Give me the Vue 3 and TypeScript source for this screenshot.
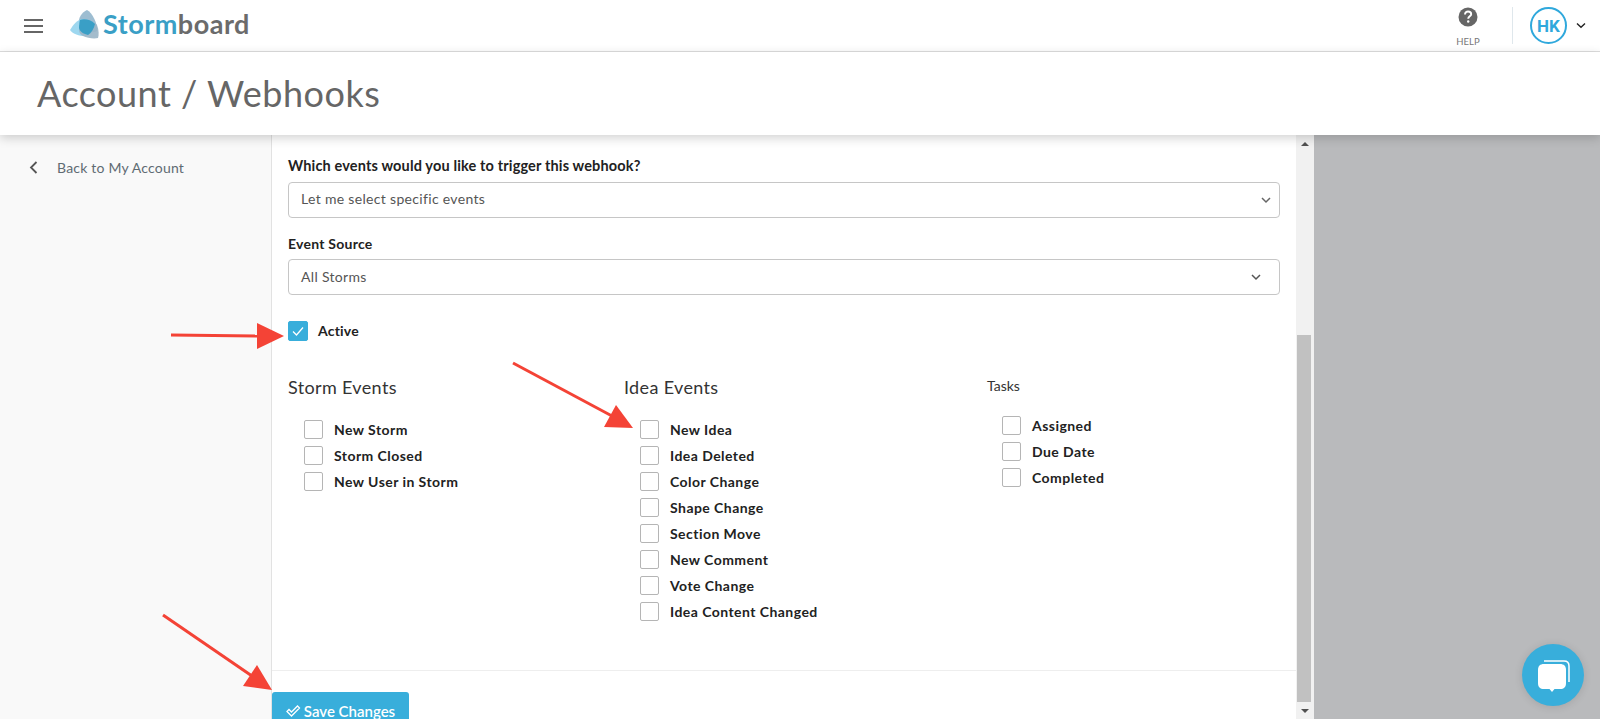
<script setup lang="ts">
const stormEvents: string[] = ['New Storm', 'Storm Closed', 'New User in Storm']
const ideaEvents: string[] = ['New Idea', 'Idea Deleted', 'Color Change', 'Shape Change', 'Section Move', 'New Comment', 'Vote Change', 'Idea Content Changed']
const taskEvents: string[] = ['Assigned', 'Due Date', 'Completed']
</script>

<template>
  <div class="page">
    <header class="topbar">
      <div class="burger"><span></span><span></span><span></span></div>
      <svg class="logo-mark" width="32" height="32" viewBox="0 0 32 32">
        <path d="M18 0 C13 2 9 8 10 13 C13 22 24 24 28 21 C29 14 23 2 18 0 Z" fill="#9dbdd1" />
        <path d="M1 20 C4 15 8 10 13 9 C20 9 25 12 27 15 C25 21 21 25 16 26 C10 26 4 24 1 20 Z" fill="#8dd0ec" opacity=".85" />
        <path d="M10 20 C10 15 12 12 16 12 C22 12 27 13 28 15 C30 20 30 25 29 28 C25 29 18 28 14 26 C12 25 10 23 10 20 Z" fill="#9ab5c6" opacity=".9" />
        <path d="M11 10 C15 8.500 22 9.500 26 14 C25 19 22 23 19 25 C15 24 11 22 10 18 C10 15 10.500 12 11 10 Z" fill="#3a9fc6" />
      </svg>
      <div class="wordmark"><span class="w1">Storm</span><span class="w2">board</span></div>
      <div class="spacer"></div>
      <div class="help">
        <svg width="20" height="20" viewBox="0 0 20 20">
          <circle cx="10" cy="10" r="9.500" fill="#666" />
          <path d="M7 7.500 C7 5.500 8.500 4.500 10 4.500 C12 4.500 13.200 5.700 13.200 7.200 C13.200 9.200 10.200 9.500 10.200 11.700" fill="none" stroke="#fff" stroke-width="1.900" />
          <circle cx="10.200" cy="14.500" r="1.200" fill="#fff" />
        </svg>
        <span>HELP</span>
      </div>
      <div class="divider"></div>
      <div class="avatar">HK</div>
      <svg class="caret" width="10" height="7" viewBox="0 0 10 7"><path d="M1 1.500 L5 5.200 L9 1.500" fill="none" stroke="#222" stroke-width="1.400" /></svg>
    </header>

    <div class="titlebar"><h1>Account / Webhooks</h1></div>

    <div class="body">
      <aside class="sidebar">
        <svg width="9" height="13" viewBox="0 0 9 13"><path d="M7.500 1 L2 6.500 L7.500 12" fill="none" stroke="#555" stroke-width="1.800" /></svg>
        <span>Back to My Account</span>
      </aside>

      <main class="main">
        <div class="form">
          <label class="field-label">Which events would you like to trigger this webhook?</label>
          <div class="select">
            <span>Let me select specific events</span>
            <svg width="10" height="7" viewBox="0 0 10 7"><path d="M1 1 L5 5 L9 1" fill="none" stroke="#666" stroke-width="1.500" /></svg>
          </div>
          <label class="field-label second">Event Source</label>
          <div class="select wide-caret">
            <span>All Storms</span>
            <svg width="10" height="7" viewBox="0 0 10 7"><path d="M1 1 L5 5 L9 1" fill="none" stroke="#555" stroke-width="1.500" /></svg>
          </div>
          <div class="active-row">
            <span class="box on">
              <svg width="14" height="12" viewBox="0 0 14 12"><path d="M2 6.500 L5.500 10 L12 2.500" fill="none" stroke="#fff" stroke-width="1.300" /></svg>
            </span>
            <span class="check-label">Active</span>
          </div>
          <div class="columns">
            <section>
              <h3>Storm Events</h3>
              <ul>
                <li v-for="e in stormEvents" :key="e"><span class="box"></span><span class="check-label">{{ e }}</span></li>
              </ul>
            </section>
            <section>
              <h3>Idea Events</h3>
              <ul>
                <li v-for="e in ideaEvents" :key="e"><span class="box"></span><span class="check-label">{{ e }}</span></li>
              </ul>
            </section>
            <section class="tasks">
              <h4>Tasks</h4>
              <ul>
                <li v-for="e in taskEvents" :key="e"><span class="box"></span><span class="check-label">{{ e }}</span></li>
              </ul>
            </section>
          </div>
        </div>
        <div class="footer">
          <button class="save" type="button">
            <svg width="15" height="12" viewBox="0 0 15 12"><path d="M1 6.500 L3 4.500 L5.500 7 L11.500 1 L13.500 3 L5.500 11 Z" fill="none" stroke="#fff" stroke-width="1.300" /></svg>
            Save Changes
          </button>
        </div>
      </main>

      <div class="scrollbar">
        <div class="arrow up"></div>
        <div class="track"><div class="thumb"></div></div>
        <div class="arrow down"></div>
      </div>

      <div class="backdrop"></div>
    </div>

    <svg class="arrows" width="1600" height="719" viewBox="0 0 1600 719">
      <g fill="#f44336" stroke="#f44336">
        <line x1="171" y1="335" x2="260" y2="336" stroke-width="3" />
        <polygon points="257,323 284,336 257,349" stroke="none" />
        <line x1="513" y1="363" x2="612" y2="416" stroke-width="3" />
        <polygon points="616,405 633,428 604,427" stroke="none" />
        <line x1="163" y1="615" x2="252" y2="676" stroke-width="3" />
        <polygon points="257,665 272,690 243,686" stroke="none" />
      </g>
    </svg>

    <div class="chat">
      <svg width="34" height="34" viewBox="0 0 34 34">
        <path d="M8 3 L28 3 Q33 3 33 8 L33 24" fill="none" stroke="#fff" stroke-width="1.500" />
        <path d="M8 6 L24 6 C28 6 30 8 30 12 L30 25 C30 29 28 31 24 31 L18.500 31 L16 34 L13.500 31 L8 31 C4 31 2 29 2 25 L2 12 C2 8 4 6 8 6 Z" fill="#fff" />
      </svg>
    </div>
  </div>
</template>

<style>
html, body { margin: 0; background: #fff; }
</style>

<style scoped>
.page {
  position: relative;
  width: 1600px;
  height: 719px;
  overflow: hidden;
  display: flex;
  flex-direction: column;
  font-family: Lato, "Open Sans", sans-serif;
  color: #222;
  background: #fff;
}
.topbar {
  height: 51px;
  flex: none;
  display: flex;
  align-items: center;
  border-bottom: 1px solid #dedede;
  box-sizing: content-box;
  padding-left: 24px;
}
.burger { width: 19px; display: flex; flex-direction: column; gap: 4px; margin-right: 26px; }
.burger span { height: 2px; background: #666; display: block; }
.logo-mark { flex: none; }
.wordmark { font-size: 27px; font-weight: 700; margin-left: 2px; letter-spacing: .5px; line-height: 1; margin-bottom: 4px; }
.w1 { color: #3a9fc6; }
.w2 { color: #6b6b6b; }
.spacer { flex: 1; }
.help { width: 40px; display: flex; flex-direction: column; align-items: center; gap: 9px; font-size: 9.500px; color: #777; margin-right: 24px; margin-top: 2px; }
.divider { width: 1px; height: 37px; background: #dfe7ec; margin-right: 17px; }
.avatar {
  width: 37px; height: 37px; box-sizing: border-box;
  border: 2px solid #2fa8dc; border-radius: 50%;
  color: #2fa8dc; font-size: 17px; font-weight: 700;
  display: flex; align-items: center; justify-content: center;
  font-family: Roboto, sans-serif;
  margin-right: 9px;
}
.caret { margin-right: 14px; }
.titlebar {
  height: 83px;
  flex: none;
  display: flex;
  align-items: center;
  padding: 0 0 2px 37px;
  box-sizing: border-box;
  background: #fff;
  box-shadow: 0 3px 10px rgba(0, 0, 0, .18);
  position: relative;
  z-index: 2;
}
h1 { margin: 0; font-size: 36px; font-weight: 400; color: #666; letter-spacing: .5px; }
.body { flex: 1; min-height: 0; display: flex; }
.sidebar {
  width: 272px; box-sizing: border-box; flex: none;
  background: #f9f9f9; border-right: 1px solid #e2e2e2;
  display: flex; align-items: flex-start; gap: 19px;
  padding: 24px 0 0 29px;
  font-size: 14px; color: #5f6b73; letter-spacing: .2px;
}
.sidebar svg { margin-top: 2px; }
.main { width: 1024px; flex: none; display: flex; flex-direction: column; min-height: 0; }
.form { height: 535px; box-sizing: border-box; padding: 21px 16px 0 16px; flex: none; }
.field-label { display: block; font-size: 14.500px; font-weight: 700; line-height: 20px; color: #222; letter-spacing: .15px; }
.second { margin-top: 16px; font-size: 14px; letter-spacing: .25px; }
.select {
  height: 36px; box-sizing: border-box; margin-top: 6px;
  border: 1px solid #c6c6c6; border-radius: 4px;
  display: flex; align-items: center; justify-content: space-between;
  padding: 0 8px 0 12px;
  font-size: 14px; color: #555; letter-spacing: .32px;
}
.select span { margin-top: -3px; }
.wide-caret { padding-right: 18px; margin-top: 5px; }
.wide-caret span { margin-top: -2px; }
.active-row { display: flex; align-items: center; margin-top: 26px; height: 20px; }
.active-row .check-label { margin-left: 10px; letter-spacing: .2px; margin-top: -1px; }
.box {
  width: 19px; height: 19px; flex: none; box-sizing: border-box;
  border: 1.500px solid #b5b5b5; border-radius: 2px; background: #fff;
  display: flex; align-items: center; justify-content: center;
}
.box.on { width: 20px; height: 20px; background: #38aedb; border-color: #38aedb; }
.check-label { font-size: 14px; font-weight: 700; color: #222; margin-left: 11px; line-height: 19px; letter-spacing: .45px; }
.columns { display: grid; grid-template-columns: 336px 363px 1fr; margin-top: 34px; }
h3 { margin: 0 0 1px; font-size: 18px; font-weight: 400; line-height: 24px; color: #333; letter-spacing: .35px; }
h4 { margin: -1px 0 0; font-size: 14px; font-weight: 400; line-height: 24px; color: #333; }
ul { list-style: none; margin: 21px 0 0 16px; padding: 0; display: flex; flex-direction: column; gap: 7px; }
.tasks ul { margin: 18px 0 0 15px; }
li { display: flex; align-items: center; height: 19px; }
.footer { border-top: 1px solid #eee; padding-top: 21px; flex: none; }
.save {
  width: 137px; height: 44px; border: 0; border-radius: 3px; padding: 0 0 6px;
  background: #38aedb; color: #fff; font: 600 15px Lato, sans-serif;
  display: flex; align-items: center; justify-content: center; gap: 3px;
}
.scrollbar { width: 18px; flex: none; background: #f1f1f1; display: flex; flex-direction: column; }
.arrow { height: 17px; flex: none; display: flex; align-items: center; justify-content: center; }
.arrow::before { content: ""; border-left: 4px solid transparent; border-right: 4px solid transparent; }
.up::before { border-bottom: 4px solid #505050; }
.down::before { border-top: 4px solid #505050; }
.track { flex: 1; padding-top: 183px; box-sizing: border-box; display: flex; }
.thumb { width: 14px; margin-left: 1px; background: #c1c1c1; height: 100%; }
.backdrop { flex: 1; background: #b9babc; }
.arrows { position: absolute; left: 0; top: 0; z-index: 3; pointer-events: none; }
.chat {
  position: absolute; left: 1522px; top: 644px; z-index: 4;
  width: 62px; height: 62px; border-radius: 50%;
  background: #38aedb; box-shadow: 0 1px 8px rgba(0, 0, 0, .12);
  display: flex; align-items: center; justify-content: center;
}
</style>
